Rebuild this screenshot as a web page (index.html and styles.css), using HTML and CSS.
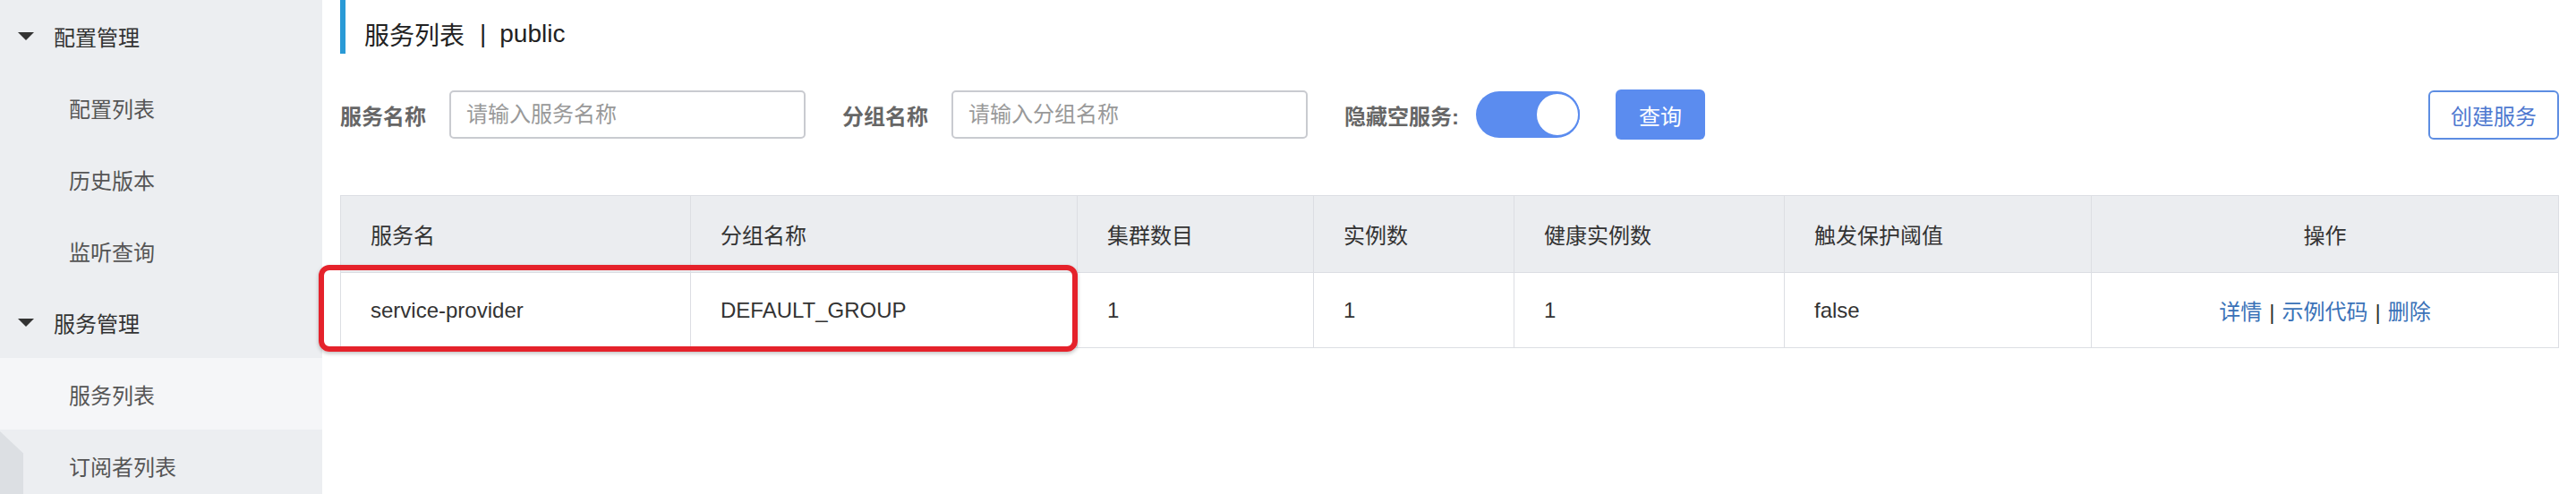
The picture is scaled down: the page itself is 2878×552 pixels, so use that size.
FILE: index.html
```html
<!DOCTYPE html>
<html>
<head>
	<meta charset="utf-8">
	<link rel="stylesheet" href="styles.css">
</head>
<body>

	<aside class="sidebar">
		<div class="menu-group"><span class="caret"></span>配置管理</div>
		<div class="menu-item">配置列表</div>
		<div class="menu-item">历史版本</div>
		<div class="menu-item">监听查询</div>
		<div class="menu-group"><span class="caret"></span>服务管理</div>
		<div class="menu-item active">服务列表</div>
		<div class="menu-item">订阅者列表</div>
		<div class="fold"></div>
	</aside>

	<main class="main">
		<div class="title">服务列表<span class="sep">|</span>public</div>

		<div class="filter">
			<span class="label">服务名称</span>
			<input class="input" type="text" placeholder="请输入服务名称">
			<span class="label label-group">分组名称</span>
			<input class="input" type="text" placeholder="请输入分组名称">
			<span class="label label-hide">隐藏空服务:</span>
			<span class="toggle"><span class="knob"></span></span>
			<button class="btn-query">查询</button>
			<button class="btn-create">创建服务</button>
		</div>

		<div class="table-wrap">
			<table class="service-table">
				<colgroup>
					<col class="c-name">
					<col class="c-group">
					<col class="c-cluster">
					<col class="c-inst">
					<col class="c-healthy">
					<col class="c-threshold">
					<col class="c-ops">
				</colgroup>
				<tr>
					<th>服务名</th>
					<th>分组名称</th>
					<th>集群数目</th>
					<th>实例数</th>
					<th>健康实例数</th>
					<th>触发保护阈值</th>
					<th class="center">操作</th>
				</tr>
				<tr>
					<td>service-provider</td>
					<td>DEFAULT_GROUP</td>
					<td>1</td>
					<td>1</td>
					<td>1</td>
					<td>false</td>
					<td class="center ops">
						<a class="link">详情</a><span class="bar">|</span><a class="link">示例代码</a><span class="bar">|</span><a class="link">删除</a>
					</td>
				</tr>
			</table>
			<div class="highlight"></div>
		</div>
	</main>

</body>
</html>
```

FILE: styles.css
```css
body {
	margin: 0;
	height: 552px;
	overflow: hidden;
	display: flex;
	background: #fff;
	font-family: "Liberation Sans", "Noto Sans CJK SC", sans-serif;
	color: #333;
}

/* sidebar */

.sidebar {
	position: relative;
	width: 360px;
	flex: none;
	background: #eceef1;
}

.menu-group,
.menu-item {
	height: 80px;
	display: flex;
	align-items: center;
	font-size: 24px;
}

.menu-group {
	padding-left: 20px;
	color: #333;
}

.caret {
	width: 0;
	height: 0;
	border-left: 9px solid transparent;
	border-right: 9px solid transparent;
	border-top: 9px solid #333;
	margin-right: 22px;
}

.menu-item {
	padding-left: 77px;
	color: #555;
}

.menu-item.active {
	background: #f5f6f8;
}

.fold {
	position: absolute;
	left: 0;
	top: 482px;
	width: 26px;
	height: 70px;
	background: #dcdfe3;
	clip-path: polygon(0 0, 100% 35%, 100% 100%, 0 100%);
}

/* main */

.main {
	flex: 1;
	padding: 0 19px 0 20px;
}

.title {
	height: 60px;
	box-sizing: border-box;
	padding: 16px 0 0 21px;
	border-left: 6px solid #2a9ad6;
	display: flex;
	align-items: center;
	font-size: 28px;
	color: #222;
}

.sep {
	margin: 0 15px 0 17px;
}

.filter {
	display: flex;
	align-items: center;
	height: 56px;
	margin-top: 40px;
}

.label {
	font-size: 24px;
	font-weight: bold;
	color: #666;
}

.label-group {
	margin-left: 41px;
}

.label-hide {
	margin-left: 41px;
}

.input {
	width: 398px;
	height: 54px;
	box-sizing: border-box;
	margin-left: 26px;
	padding: 0 17px;
	border: 2px solid #c9cbd0;
	border-radius: 5px;
	font-family: inherit;
	font-size: 24px;
	outline: none;
}

.input::placeholder {
	color: #999;
}

.toggle {
	position: relative;
	width: 116px;
	height: 52px;
	margin-left: 19px;
	border-radius: 26px;
	background: #5b8cef;
}

.knob {
	position: absolute;
	right: 0;
	top: 1px;
	width: 50px;
	height: 50px;
	box-sizing: border-box;
	border: 2px solid #5b8cef;
	border-radius: 50%;
	background: #fff;
}

.btn-query {
	width: 100px;
	height: 56px;
	margin-left: 40px;
	border: none;
	border-radius: 6px;
	background: #5b8cef;
	color: #fff;
	font-family: inherit;
	font-size: 24px;
}

.btn-create {
	width: 146px;
	height: 55px;
	margin-left: auto;
	border: 2px solid #5d8de2;
	border-radius: 6px;
	background: #fff;
	color: #4f79d0;
	font-family: inherit;
	font-size: 24px;
}

/* table */

.table-wrap {
	position: relative;
	margin-top: 62px;
}

.service-table {
	width: 100%;
	border-collapse: collapse;
	table-layout: fixed;
	font-size: 24px;
	color: #333;
}

.c-name { width: 391px; }
.c-group { width: 432px; }
.c-cluster { width: 264px; }
.c-inst { width: 224px; }
.c-healthy { width: 302px; }
.c-threshold { width: 343px; }

th {
	height: 85px;
	padding: 0 0 0 33px;
	background: #ebedf0;
	border: 1px solid #dcdee3;
	font-weight: normal;
	text-align: left;
}

td {
	height: 83px;
	padding: 0 0 0 33px;
	border: 1px solid #dcdee3;
}

th.center,
td.center {
	padding: 0;
	text-align: center;
}

.link {
	color: #3a72b8;
}

.bar {
	margin: 0 8px;
	color: #333;
}

.highlight {
	position: absolute;
	left: -24px;
	top: 78px;
	width: 848px;
	height: 97px;
	box-sizing: border-box;
	border: 6px solid #e5222b;
	border-radius: 12px;
	box-shadow: 0 2px 4px rgba(0, 0, 0, 0.25);
}
```
